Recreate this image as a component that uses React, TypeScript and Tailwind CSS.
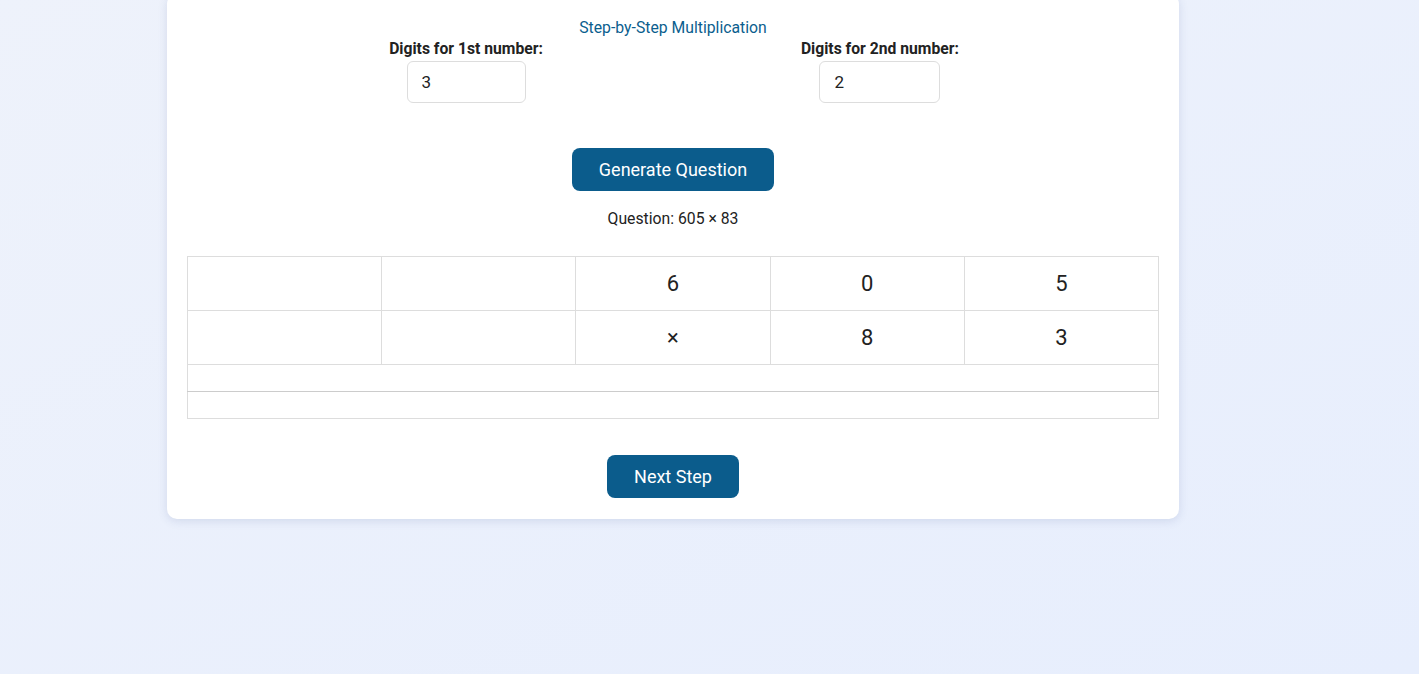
import { useState } from 'react';

const top = ['', '', '6', '0', '5'];
const bottom = ['', '', '×', '8', '3'];

export default function App() {
  const [first, setFirst] = useState('3');
  const [second, setSecond] = useState('2');

  return (
    <div className="min-h-screen bg-gradient-to-br from-[#eef2fb] to-[#e7eefd] font-['Roboto',sans-serif] text-[#222]">
      <div className="w-[1012px] ml-[167px] -mt-[6px] bg-white rounded-[10px] shadow-[0_2px_10px_rgba(60,80,140,0.15)] px-5 pt-[25px] pb-[21px]">
        <h1 className="text-center text-[15.75px] leading-[18px] text-[#0b5e8e]">Step-by-Step Multiplication</h1>

        {/* Digit inputs */}
        <div className="flex justify-center gap-[258px] mt-[3px] pl-[2px]">
          <div className="flex flex-col items-center">
            <label className="text-[15.7px] leading-[18px] font-bold text-[#222]">Digits for 1st number:</label>
            <input
              value={first}
              onChange={e => setFirst(e.target.value)}
              className="mt-[3px] w-[119px] h-[42px] border border-[#dddddd] rounded-[6px] px-[14px] text-[17px] outline-none"
            />
          </div>
          <div className="flex flex-col items-center">
            <label className="text-[15.7px] leading-[18px] font-bold text-[#222]">Digits for 2nd number:</label>
            <input
              value={second}
              onChange={e => setSecond(e.target.value)}
              className="mt-[3px] w-[121px] h-[42px] border border-[#dddddd] rounded-[6px] px-[14px] text-[17px] outline-none"
            />
          </div>
        </div>

        <div className="flex justify-center mt-[45px]">
          <button className="w-[202px] h-[43px] bg-[#0b5c8c] text-white text-[18px] font-normal rounded-[8px]">
            Generate Question
          </button>
        </div>

        <p className="text-center text-[15.75px] leading-[18px] mt-[19px]">Question: 605 × 83</p>

        {/* Work table */}
        <table className="w-full mt-[28px] border-collapse table-fixed">
          <tbody>
            <tr>
              {top.map((d, i) => (
                <td key={i} className="h-[54px] border border-[#dddddd] text-center text-[22px]">{d}</td>
              ))}
            </tr>
            <tr>
              {bottom.map((d, i) => (
                <td key={i} className="h-[54px] border border-[#dddddd] text-center text-[22px]">{d}</td>
              ))}
            </tr>
            <tr>
              <td colSpan={5} className="h-[27px] border border-[#dddddd] border-b-[#cccccc]"></td>
            </tr>
            <tr>
              <td colSpan={5} className="h-[27px] border border-[#dddddd] border-t-[#cccccc]"></td>
            </tr>
          </tbody>
        </table>

        <div className="flex justify-center mt-[36px]">
          <button className="w-[132px] h-[43px] bg-[#0b5c8c] text-white text-[18px] font-normal rounded-[8px]">
            Next Step
          </button>
        </div>
      </div>
    </div>
  );
}
